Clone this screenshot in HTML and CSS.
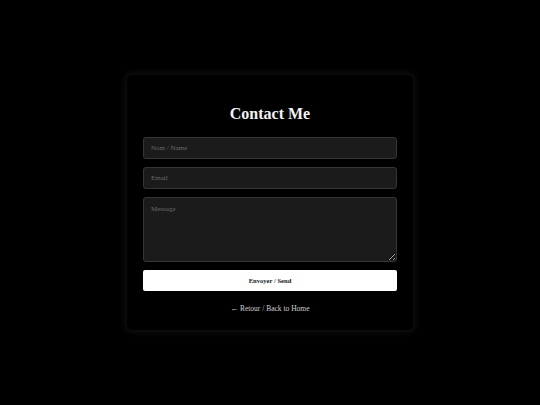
FILE: index.html
```html
<!DOCTYPE html>
<html lang="fr">
<head>
<meta charset="utf-8">
<title>Contact Me</title>
<link rel="stylesheet" href="styles.css">
</head>
<body>
<main class="page">
  <section class="card">
    <h1 class="title">Contact Me</h1>
    <form class="form">
      <input class="field" type="text" placeholder="Nom / Name">
      <input class="field" type="email" placeholder="Email">
      <textarea class="field area" placeholder="Message"></textarea>
      <button class="send" type="button">Envoyer / Send</button>
    </form>
    <a class="back" href="#">&larr; Retour / Back to Home</a>
  </section>
</main>
</body>
</html>
```

FILE: styles.css
```css
html, body {
  margin: 0;
  padding: 0;
  background: #000;
}
body {
  font-family: "Liberation Serif", "DejaVu Serif", serif;
  color: #eee;
}
.page {
  width: 540px;
  height: 405px;
  display: flex;
  align-items: center;
  justify-content: center;
}
.card {
  width: 254px;
  padding: 25px 16px 16px;
  background: #000;
  border-radius: 5px;
  box-shadow: 0 0 6px 2px rgba(255, 255, 255, 0.07);
  display: flex;
  flex-direction: column;
  align-items: stretch;
}
.title {
  margin: 0 0 9px;
  font-size: 16px;
  line-height: 28px;
  font-weight: bold;
  text-align: center;
  color: #f2f2f2;
}
.form {
  display: flex;
  flex-direction: column;
  gap: 8px;
}
.field {
  box-sizing: border-box;
  width: 100%;
  height: 22px;
  margin: 0;
  padding: 0 7px;
  background: #1b1b1b;
  border: 1px solid #353535;
  border-radius: 3px;
  color: #ddd;
  font-family: "Liberation Serif", "DejaVu Serif", serif;
  font-size: 7px;
  outline: none;
}
.field::placeholder {
  color: #6a6a6a;
}
.area {
  height: 65px;
  padding: 7px;
  resize: vertical;
  display: block;
}
.send {
  height: 21px;
  margin: 0;
  padding: 0;
  background: #fff;
  border: none;
  border-radius: 2px;
  color: #222;
  font-family: "Liberation Serif", "DejaVu Serif", serif;
  font-size: 6.6px;
  font-weight: bold;
  cursor: pointer;
}
.back {
  margin-top: 12px;
  line-height: 11px;
  font-size: 7.5px;
  text-align: center;
  color: #d0d0d0;
  text-decoration: none;
}
```
